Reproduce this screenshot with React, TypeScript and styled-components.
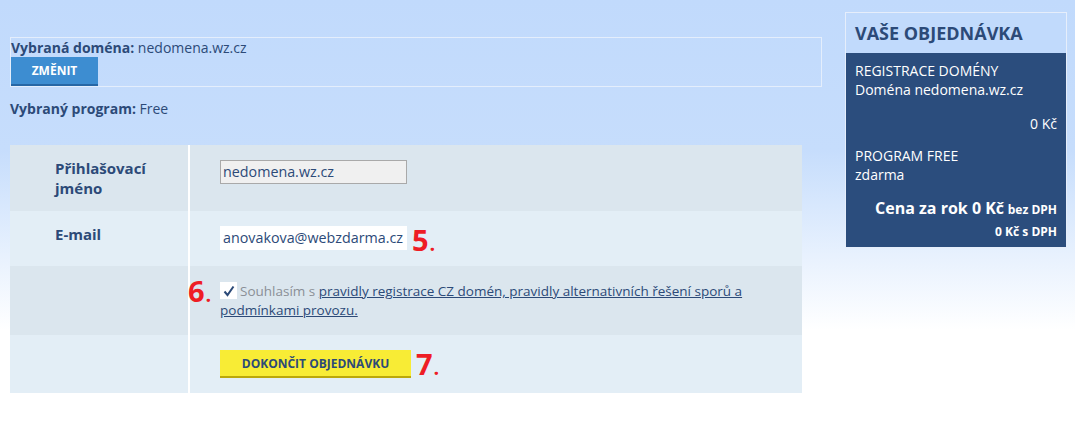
import React from "react";
import styled, { createGlobalStyle } from "styled-components";

const Global = createGlobalStyle`
  html, body { margin: 0; padding: 0; }
  body {
    width: 1075px;
    height: 429px;
    overflow: hidden;
    font-family: "Open Sans", "Noto Sans", sans-serif;
    font-size: 14px;
    color: #2c4a78;
    background: linear-gradient(to bottom, #c1dafc 0px, #c6ddfc 150px, #e9f2fe 260px, #ffffff 330px);
  }
`;

const Page = styled.div`
  display: flex;
  align-items: flex-start;
  padding: 12px 8px 0 10px;
  gap: 23px;
`;

const Main = styled.div`
  width: 812px;
  display: flex;
  flex-direction: column;
  padding-top: 25px;
`;

const DomainBox = styled.div`
  border: 1px solid #e4eefc;
  height: 48px;
  display: flex;
  flex-direction: column;
  align-items: flex-start;
`;

const InfoLine = styled.div`
  line-height: 19px;
  height: 19px;
  b { font-weight: 700; }
`;

const BlueButton = styled.button`
  width: 87px;
  height: 30px;
  border: none;
  border-bottom: 2px solid #2767a5;
  background: #3d8dd1;
  color: #fff;
  font-family: "Open Sans", sans-serif;
  font-weight: 700;
  font-size: 12px;
  padding: 0;
  text-transform: uppercase;
`;

const Program = styled(InfoLine)`
  margin-top: 12px;
`;

const Table = styled.div`
  margin-top: 27px;
  width: 792px;
  display: grid;
  grid-template-columns: 180px 1fr;
`;

const Label = styled.div<{ $h: number; $alt?: boolean }>`
  height: ${(p) => p.$h}px;
  box-sizing: border-box;
  background: ${(p) => (p.$alt ? "#e3eef6" : "#dbe6ee")};
  border-right: 2px solid #fff;
  padding: 13px 10px 0 45px;
  font-weight: 700;
  font-size: 15px;
  line-height: 20px;
`;

const Cell = styled.div<{ $h: number; $alt?: boolean; $pt?: number }>`
  height: ${(p) => p.$h}px;
  box-sizing: border-box;
  background: ${(p) => (p.$alt ? "#e3eef6" : "#dbe6ee")};
  padding: ${(p) => p.$pt ?? 15}px 20px 0 30px;
  display: flex;
  align-items: flex-start;
  position: relative;
`;

const Input = styled.div<{ $disabled?: boolean }>`
  width: 187px;
  height: 24px;
  box-sizing: border-box;
  border: 1px solid ${(p) => (p.$disabled ? "#a9a9a9" : "#ffffff")};
  background: ${(p) => (p.$disabled ? "#f0f0f0" : "#ffffff")};
  padding: 0 2px;
  line-height: 22px;
  font-size: 14.3px;
  color: #2c4a78;
  white-space: nowrap;
  overflow: hidden;
`;

const Marker = styled.span`
  color: #ee1d25;
  font-family: "Open Sans", sans-serif;
  font-weight: 700;
  font-size: 29px;
  line-height: 26px;
  margin-left: 5px;
  margin-top: 1px;
  letter-spacing: -1px;
  small {
    font-size: 20px;
    margin-left: 2px;
  }
`;

const SideMarker = styled(Marker)`
  position: absolute;
  left: -2px;
  top: 12px;
  margin: 0;
`;

const Agree = styled.div`
  width: 535px;
  line-height: 19px;
  font-size: 13.5px;
  color: #8a8f96;
`;

const Check = styled.span`
  display: inline-block;
  vertical-align: -3px;
  width: 17px;
  height: 17px;
  background: #fff;
  margin-right: 3px;
  position: relative;
  svg { position: absolute; left: 3px; top: 3px; }
`;

const Link = styled.a`
  color: #2c4a78;
  text-decoration: underline;
`;

const YellowButton = styled.button`
  width: 191px;
  height: 28px;
  border: none;
  border-bottom: 2px solid #bba80a;
  background: #f8ec35;
  color: #2c4a78;
  font-family: "Open Sans", sans-serif;
  font-weight: 700;
  font-size: 12px;
  padding: 0;
`;

const Side = styled.div`
  width: 222px;
  border: 1px solid #e6eefb;
  box-sizing: border-box;
`;

const SideHead = styled.div`
  height: 40px;
  background: #c1dafc;
  padding: 8px 9px 0;
  box-sizing: border-box;
  font-weight: 700;
  font-size: 18px;
  line-height: 24px;
  color: #2c4a78;
`;

const SideBody = styled.div`
  background: #2b4d7d;
  color: #fff;
  padding: 8px 9px 6px;
  line-height: 19px;
  font-size: 14px;
`;

const Right = styled.div<{ $mt?: number }>`
  text-align: right;
  margin-top: ${(p) => p.$mt ?? 0}px;
`;

const Gap = styled.div<{ $h: number }>`
  height: ${(p) => p.$h}px;
`;

const Big = styled.span`
  font-weight: 700;
  font-size: 16px;
`;

const Small = styled.span`
  font-weight: 700;
  font-size: 12px;
`;

export default function App() {
  return (
    <>
      <Global />
      <Page>
        <Main>
          <DomainBox>
            <InfoLine>
              <b>Vybraná doména:</b> nedomena.wz.cz
            </InfoLine>
            <BlueButton>Změnit</BlueButton>
          </DomainBox>
          <Program>
            <b>Vybraný program:</b> Free
          </Program>
          <Table>
            <Label $h={66}>
              Přihlašovací
              <br />
              jméno
            </Label>
            <Cell $h={66}>
              <Input $disabled>nedomena.wz.cz</Input>
            </Cell>
            <Label $h={55} $alt>
              E-mail
            </Label>
            <Cell $h={55} $alt>
              <Input>anovakova@webzdarma.cz</Input>
              <Marker>
                5<small>.</small>
              </Marker>
            </Cell>
            <Label $h={69} />
            <Cell $h={69} $pt={16}>
              <SideMarker>
                6<small>.</small>
              </SideMarker>
              <Agree>
                <Check>
                  <svg width="12" height="12" viewBox="0 0 12 12">
                    <path
                      d="M1.5 6.5 L4.5 10 L10.5 1.5"
                      fill="none"
                      stroke="#2c4a78"
                      strokeWidth="2"
                    />
                  </svg>
                </Check>
                Souhlasím s{" "}
                <Link>
                  pravidly registrace CZ domén, pravidly alternativních řešení
                  sporů a podmínkami provozu.
                </Link>
              </Agree>
            </Cell>
            <Label $h={58} $alt />
            <Cell $h={58} $alt>
              <YellowButton>DOKONČIT OBJEDNÁVKU</YellowButton>
              <Marker>
                7<small>.</small>
              </Marker>
            </Cell>
          </Table>
        </Main>
        <Side>
          <SideHead>VAŠE OBJEDNÁVKA</SideHead>
          <SideBody>
            <div>REGISTRACE DOMÉNY</div>
            <div>Doména nedomena.wz.cz</div>
            <Right $mt={15}>0 Kč</Right>
            <Gap $h={13} />
            <div>PROGRAM FREE</div>
            <div>zdarma</div>
            <Right $mt={15}>
              <Big>Cena za rok 0 Kč</Big> <Small>bez DPH</Small>
            </Right>
            <Right $mt={2}>
              <Small>0 Kč s DPH</Small>
            </Right>
          </SideBody>
        </Side>
      </Page>
    </>
  );
}
